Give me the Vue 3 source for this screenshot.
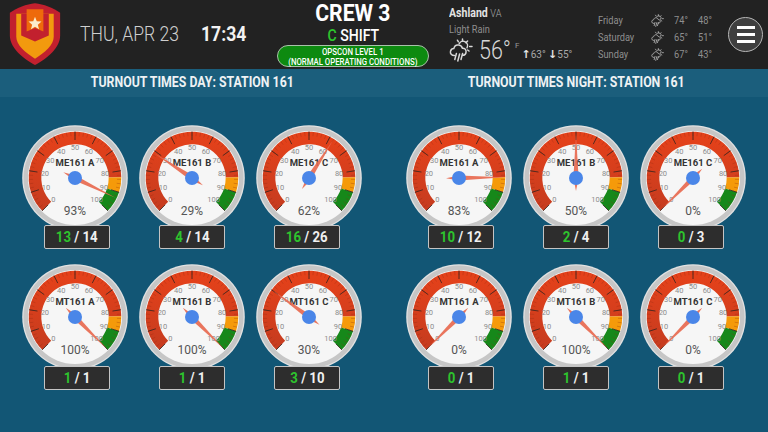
<template>
  <div class="board">
    <!-- hidden defs shared by the gauges and weather icons -->
    <svg class="defs" width="0" height="0">
      <defs>
        <linearGradient id="redBand" x1="0" y1="0" x2="0" y2="1">
          <stop offset="0" stop-color="#e4411a" />
          <stop offset="1" stop-color="#c73c1f" />
        </linearGradient>
        <symbol id="rainIcon" viewBox="0 0 24 24">
          <g fill="none" stroke="currentColor" stroke-width="1.5" stroke-linecap="round" stroke-linejoin="round">
            <path d="M5.5 17.5C2.5 17.5 1 15.5 1.5 13.3 2 11.5 3.3 10.6 4.8 10.6 5.4 7.9 7.6 6.6 9.8 7 11.8 7.3 13 8.7 13.4 10.2 15.5 9.9 17.2 11.5 17.1 13.6 17 15.8 15.4 17.3 13.5 17.3" />
            <path d="M10.2 5.6A4.4 4.4 0 0 1 18 9.8" />
            <path d="M13.5 1v2.2M18.6 3l-1.6 1.6M23 8.6h-2.400M20 13l-1.400-1M8.400 2.200l1 1.600" />
            <path d="M7.400 15.500l-1.600 6M10.600 16l-1.800 7M13.600 15.500l-1.600 6" />
          </g>
        </symbol>
      </defs>
    </svg>

    <header class="top">
      <svg class="logo" viewBox="0 0 70 70">
        <path d="M9.500 13C17 7.500 26 4.500 35 3.300 44 4.500 53 7.500 60.500 13V36C60.500 48 48 59 35 66 22 59 9.500 48 9.500 36Z" fill="#c2202e" />
        <path d="M16 14H54V37C54 46 45 53 35 59.500 25 53 16 46 16 37Z" fill="#f29a0e" />
        <path d="M21 14H49V36L35 42 21 36Z" fill="#c2202e" />
        <path d="M26.500 9.500H43.500V32L35 28.500 26.500 32Z" fill="#ee6a0b" />
        <polygon points="35,17 36.800,21.600 41.600,21.900 37.900,25 39.100,29.700 35,27.100 30.900,29.700 32.100,25 28.400,21.900 33.200,21.600" fill="#fbeccb" />
      </svg>
      <div class="date"><span class="narrow">THU, APR 23</span></div>
      <div class="time"><span class="narrow">17:34</span></div>

      <div class="crew">
        <div class="crew-name">CREW 3</div>
        <div class="crew-shift"><span class="narrow mid"><span class="green">C</span> SHIFT</span></div>
        <div class="opscon"><span class="opscon-text">OPSCON LEVEL 1<br />(NORMAL OPERATING CONDITIONS)</span></div>
      </div>

      <div class="now">
        <div class="city"><span class="narrow"><b>Ashland</b> <span>VA</span></span></div>
        <div class="cond"><span class="narrow">Light Rain</span></div>
        <div class="temp-row">
          <svg class="now-icon"><use href="#rainIcon" /></svg>
          <span class="temp">56°</span>
          <span class="unit">F</span>
          <span class="hilo"><i>↑</i>63° <i>↓</i>55°</span>
        </div>
      </div>

      <div class="forecast">
        <template v-for="d in forecast" :key="d.day">
          <span class="narrow">{{ d.day }}</span>
          <svg class="fc-icon"><use href="#rainIcon" /></svg>
          <span class="narrow">{{ d.hi }}°</span>
          <span class="narrow">{{ d.lo }}°</span>
        </template>
      </div>

      <button class="menu"><i></i><i></i><i></i></button>
    </header>

    <main class="panels">
      <section v-for="panel in panels" :key="panel.title" class="panel">
        <h2><span class="narrow mid">{{ panel.title }}</span></h2>
        <div class="grid">
          <div v-for="g in panel.gauges" :key="g.name" class="cell">
            <svg class="gauge" viewBox="0 0 108 108">
              <circle cx="54" cy="54" r="52.800" fill="#e2e2e2" />
              <circle cx="54" cy="54" r="51.500" fill="#c6c6c6" />
              <circle cx="54" cy="54" r="47" fill="#f6f6f6" />
              <path :d="arc(0, 83)" class="band" stroke="url(#redBand)" />
              <path :d="arc(83, 90)" class="band" stroke="#f59a0a" />
              <path :d="arc(90, 100)" class="band" stroke="#16881a" />
              <path v-for="t in minorTicks" :key="t" :d="tick(t, 46, 42)" class="minor" />
              <path v-for="t in majorTicks" :key="t" :d="tick(t, 46.500, 38)" class="major" />
              <text v-for="t in majorTicks" :key="t" :x="point(t, 30.500).x" :y="point(t, 30.500).y + 2.800" class="scale">{{ t }}</text>
              <text x="54" y="42" class="name">{{ g.name }}</text>
              <text x="54" y="91" class="pct">{{ g.pct }}%</text>
              <polygon :points="needle(g.pct)" class="needle" />
              <circle cx="54" cy="54" r="7" fill="#4a86e8" />
            </svg>
            <div class="count"><span class="narrow mid"><span class="green">{{ g.done }}</span> / {{ g.total }}</span></div>
          </div>
        </div>
      </section>
    </main>
  </div>
</template>

<script setup>
const forecast = [
  { day: 'Friday', hi: 74, lo: 48 },
  { day: 'Saturday', hi: 65, lo: 51 },
  { day: 'Sunday', hi: 67, lo: 43 }
]

const panels = [
  {
    title: 'TURNOUT TIMES DAY: STATION 161',
    gauges: [
      { name: 'ME161 A', pct: 93, done: 13, total: 14 },
      { name: 'ME161 B', pct: 29, done: 4, total: 14 },
      { name: 'ME161 C', pct: 62, done: 16, total: 26 },
      { name: 'MT161 A', pct: 100, done: 1, total: 1 },
      { name: 'MT161 B', pct: 100, done: 1, total: 1 },
      { name: 'MT161 C', pct: 30, done: 3, total: 10 }
    ]
  },
  {
    title: 'TURNOUT TIMES NIGHT: STATION 161',
    gauges: [
      { name: 'ME161 A', pct: 83, done: 10, total: 12 },
      { name: 'ME161 B', pct: 50, done: 2, total: 4 },
      { name: 'ME161 C', pct: 0, done: 0, total: 3 },
      { name: 'MT161 A', pct: 0, done: 0, total: 1 },
      { name: 'MT161 B', pct: 100, done: 1, total: 1 },
      { name: 'MT161 C', pct: 0, done: 0, total: 1 }
    ]
  }
]

const majorTicks = [0, 10, 20, 30, 40, 50, 60, 70, 80, 90, 100]
const minorTicks = Array.from({ length: 51 }, (_, i) => i * 2)

// 0 sits at -135deg from straight up, 100 at +135deg
function point(value, r) {
  const a = ((value * 2.7 - 135) * Math.PI) / 180
  return { x: +(54 + r * Math.sin(a)).toFixed(2), y: +(54 - r * Math.cos(a)).toFixed(2) }
}

function arc(from, to) {
  const a = point(from, 40)
  const b = point(to, 40)
  const large = (to - from) * 2.7 > 180 ? 1 : 0
  return `M${a.x} ${a.y}A40 40 0 ${large} 1 ${b.x} ${b.y}`
}

function tick(value, r1, r2) {
  const a = point(value, r1)
  const b = point(value, r2)
  return `M${a.x} ${a.y}L${b.x} ${b.y}`
}

function needle(pct) {
  const tip = point(pct, 45)
  const tail = point(pct, -13)
  const a = point(pct + 33.33, 2.6)
  const b = point(pct - 33.33, 2.6)
  return `${tip.x},${tip.y} ${a.x},${a.y} ${tail.x},${tail.y} ${b.x},${b.y}`
}
</script>

<style>
html,
body {
  margin: 0;
  background: #125675;
}
</style>

<style scoped>
.board {
  width: 768px;
  height: 432px;
  overflow: hidden;
  font-family: Roboto, "Liberation Sans", sans-serif;
  background: #125675;
}

.defs {
  position: absolute;
}

.green {
  color: #2dc42d;
}

/* stands in for the condensed face of the original */
.narrow {
  display: inline-block;
  transform: scaleX(0.88);
  transform-origin: left center;
  white-space: nowrap;
}

.narrow.mid {
  transform-origin: center;
}

.top {
  display: flex;
  align-items: flex-start;
  height: 69px;
  background: #222222;
  color: #fff;
}

.logo {
  width: 70px;
  height: 69px;
  flex: none;
}

.date {
  width: 121px;
  margin-left: 10px;
  padding-top: 22px;
  font-size: 20px;
  font-weight: 300;
  line-height: 24px;
  color: #cfcfcf;
  white-space: nowrap;
}

.time {
  width: 76px;
  padding-top: 22px;
  font-size: 20px;
  font-weight: 700;
  line-height: 24px;
  color: #f2f2f2;
}

.crew {
  width: 152px;
  display: flex;
  flex-direction: column;
  align-items: center;
}

.crew-name {
  margin-top: 1px;
  font-size: 23px;
  line-height: 26px;
  font-weight: 700;
  transform: scaleX(0.92);
}

.crew-shift {
  font-size: 16px;
  line-height: 17px;
  font-weight: 500;
}

.opscon {
  box-sizing: border-box;
  display: flex;
  justify-content: center;
  width: 152px;
  height: 22px;
  margin-top: 1px;
  border: 1px solid #a9c2a9;
  border-radius: 11px;
  background: #0d8a10;
}

.opscon-text {
  display: block;
  flex: none;
  padding-top: 1px;
  font-size: 9.500px;
  font-weight: 500;
  line-height: 9.500px;
  text-align: center;
  white-space: nowrap;
  transform: scaleX(0.82);
}

.now {
  width: 149px;
  margin-left: 20px;
  padding-top: 6px;
}

.city {
  font-size: 12px;
  line-height: 14px;
  color: #e4e4e4;
}

.city b {
  font-weight: 700;
}

.city span span {
  font-size: 10.500px;
  font-weight: 300;
  color: #aaa;
}

.cond {
  margin-top: 2px;
  font-size: 10.500px;
  line-height: 14px;
  color: #8f8f8f;
}

.temp-row {
  display: flex;
  align-items: flex-start;
  margin-top: 1px;
  color: #d8d8d8;
}

.now-icon {
  width: 24px;
  height: 24px;
  flex: none;
  color: #d8d8d8;
}

.temp {
  width: 31px;
  margin-left: 6px;
  font-size: 25px;
  line-height: 26px;
  font-weight: 300;
  white-space: nowrap;
  transform: scaleX(0.86);
  transform-origin: left center;
}

.unit {
  margin: 3px 0 0 5px;
  font-size: 8px;
  line-height: 10px;
  color: #999;
}

.hilo {
  margin: 10px 0 0 2px;
  font-size: 10px;
  line-height: 14px;
  color: #a8a8a8;
  white-space: nowrap;
}

.hilo i {
  font-family: "DejaVu Sans", sans-serif;
  font-style: normal;
  font-weight: 700;
  font-size: 11px;
  color: #e4e4e4;
}

.forecast {
  display: grid;
  grid-template-columns: 53px 23px 24px 24px;
  grid-auto-rows: 17px;
  align-items: center;
  width: 130px;
  margin-top: 12px;
  font-size: 10.500px;
  color: #8f8f8f;
}

.fc-icon {
  width: 13px;
  height: 13px;
  color: #b8b8b8;
}

.menu {
  box-sizing: border-box;
  display: flex;
  flex-direction: column;
  justify-content: center;
  align-items: center;
  gap: 4px;
  width: 35px;
  height: 35px;
  margin: 17px 0 0 0;
  padding: 0;
  border: 1.500px solid #b5b5b5;
  border-radius: 50%;
  background: #3f3f3f;
}

.menu i {
  display: block;
  width: 18px;
  height: 3px;
  background: #fff;
}

.panels {
  display: flex;
}

.panel {
  width: 384px;
}

.panel h2 {
  height: 28px;
  margin: 0;
  background: #1b5e7c;
  color: #eef2f4;
  font-size: 14px;
  font-weight: 700;
  line-height: 27px;
  text-align: center;
}

.grid {
  display: grid;
  grid-template-columns: repeat(3, 117px);
  justify-content: center;
  row-gap: 14px;
  padding-top: 27px;
}

.cell {
  display: flex;
  flex-direction: column;
  align-items: center;
}

.gauge {
  width: 108px;
  height: 108px;
}

.count {
  box-sizing: border-box;
  position: relative;
  width: 66px;
  height: 24px;
  margin-top: -7px;
  border: 1px solid #c4c4c4;
  border-radius: 2px;
  background: #2d2d2d;
  color: #f0f0f0;
  font-size: 15px;
  font-weight: 700;
  line-height: 22px;
  text-align: center;
}

.cell:nth-child(3n + 1) .count {
  margin-left: 4px;
}

.cell:nth-child(3n) .count {
  margin-right: 4px;
}

.cell:nth-child(n + 4) .count {
  margin-top: -5px;
}

.band {
  fill: none;
  stroke-width: 12.600;
}

.major {
  stroke: #33241f;
  stroke-width: 0.800;
}

.minor {
  stroke: #8f2a12;
  stroke-width: 0.300;
}

.scale {
  font-size: 7.500px;
  fill: #8c8c8c;
  text-anchor: middle;
}

.name {
  font-size: 9.500px;
  font-weight: 700;
  fill: #333;
  text-anchor: middle;
}

.pct {
  font-size: 12px;
  fill: #555;
  text-anchor: middle;
}

.needle {
  fill: #e8674c;
  fill-opacity: 0.9;
}
</style>
